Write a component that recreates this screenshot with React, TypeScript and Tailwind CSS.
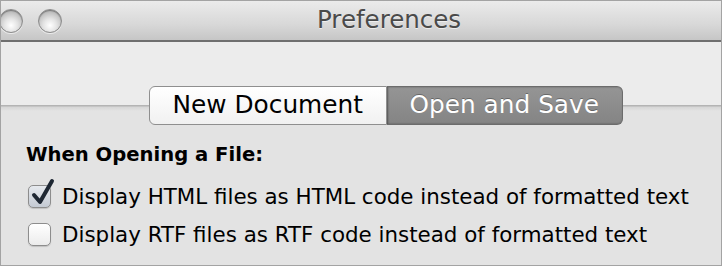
import { useState } from "react";

function TrafficLight({ className = "" }: { className?: string }) {
  return (
    <div
      className={`h-[24px] w-[24px] shrink-0 rounded-full border border-[#8c8c8c] bg-[radial-gradient(circle_at_50%_70%,#ffffff_0%,#e4e4e4_35%,#b9b9b9_75%,#9a9a9a_100%)] shadow-[inset_0_1px_1px_rgba(0,0,0,0.35),0_1px_0_rgba(255,255,255,0.6)] ${className}`}
    />
  );
}

function Checkbox({ checked, onChange }: { checked: boolean; onChange: () => void }) {
  return (
    <button
      type="button"
      onClick={onChange}
      className={`relative h-[23px] w-[23px] shrink-0 rounded-[5px] border border-[#8d8d8d] shadow-[0_1px_1px_rgba(0,0,0,0.15)] ${
        checked
          ? "bg-[linear-gradient(to_bottom,#e6e9ee,#c4cad3)]"
          : "bg-[linear-gradient(to_bottom,#ffffff,#ececec)]"
      }`}
    >
      {checked && (
        <svg
          viewBox="0 0 24 28"
          className="absolute left-[2px] top-[-8px] h-[28px] w-[24px]"
        >
          <path
            d="M3 17 L9 24 L21 3"
            fill="none"
            stroke="#1e2733"
            strokeWidth="4"
            strokeLinecap="round"
            strokeLinejoin="round"
          />
        </svg>
      )}
    </button>
  );
}

export default function App() {
  const [tab, setTab] = useState<"new" | "open">("open");
  const [html, setHtml] = useState(true);
  const [rtf, setRtf] = useState(false);

  return (
    <div className="flex h-[266px] w-[722px] flex-col overflow-hidden border border-[#a3a3a3] font-['DejaVu_Sans',sans-serif]">
      {/* Title bar */}
      <div className="flex h-[41px] shrink-0 items-center border-b-2 border-[#6f6f6f] bg-[linear-gradient(to_bottom,#ebebeb,#d8d8d8_60%,#c6c6c6)]">
        <TrafficLight className="ml-[-2px]" />
        <TrafficLight className="ml-[15px]" />
        <span className="ml-[255px] text-[24.5px] leading-none text-[#4a4a4a] [text-shadow:0_1px_0_rgba(255,255,255,0.6)]">
          Preferences
        </span>
      </div>

      {/* Toolbar + content */}
      <div className="flex flex-1 flex-col bg-[linear-gradient(to_bottom,#ececec_0,#ececec_63px,#b4b4b4_63px,#b4b4b4_64px,#d6d6d6_65px,#e3e3e3_69px,#e3e3e3_100%)]">
        <div className="ml-[148px] mt-[44px] flex h-[39px] w-[474px] shrink-0">
          <button
            type="button"
            onClick={() => setTab("new")}
            className={`flex flex-1 items-center justify-center rounded-l-[6px] border text-[24.8px] leading-none ${
              tab === "new"
                ? "border-[#6c6c6c] bg-[linear-gradient(to_bottom,#959595,#848484)] text-white"
                : "border-[#8f8f8f] bg-[linear-gradient(to_bottom,#ffffff,#f1f1f1)] text-black"
            }`}
          >
            New Document
          </button>
          <button
            type="button"
            onClick={() => setTab("open")}
            className={`flex flex-1 items-center justify-center rounded-r-[6px] border border-l-0 text-[24.8px] leading-none ${
              tab === "open"
                ? "border-[#6c6c6c] bg-[linear-gradient(to_bottom,#959595,#848484)] text-white [text-shadow:0_-1px_0_rgba(0,0,0,0.3)] shadow-[inset_1px_0_2px_rgba(0,0,0,0.4)]"
                : "border-[#8f8f8f] bg-[linear-gradient(to_bottom,#ffffff,#f1f1f1)] text-black"
            }`}
          >
            Open and Save
          </button>
        </div>

        <div className="ml-[25px] mt-[18px] text-[19.6px] font-bold leading-[24px] text-black">
          When Opening a File:
        </div>

        <div className="ml-[27px] mt-[18px] flex flex-col gap-[15px]">
          <label className="flex items-center gap-[11px] text-[21.4px] leading-[23px] text-black">
            <Checkbox checked={html} onChange={() => setHtml(!html)} />
            Display HTML files as HTML code instead of formatted text
          </label>
          <label className="flex items-center gap-[11px] text-[21.4px] leading-[23px] text-black">
            <Checkbox checked={rtf} onChange={() => setRtf(!rtf)} />
            Display RTF files as RTF code instead of formatted text
          </label>
        </div>
      </div>
    </div>
  );
}
